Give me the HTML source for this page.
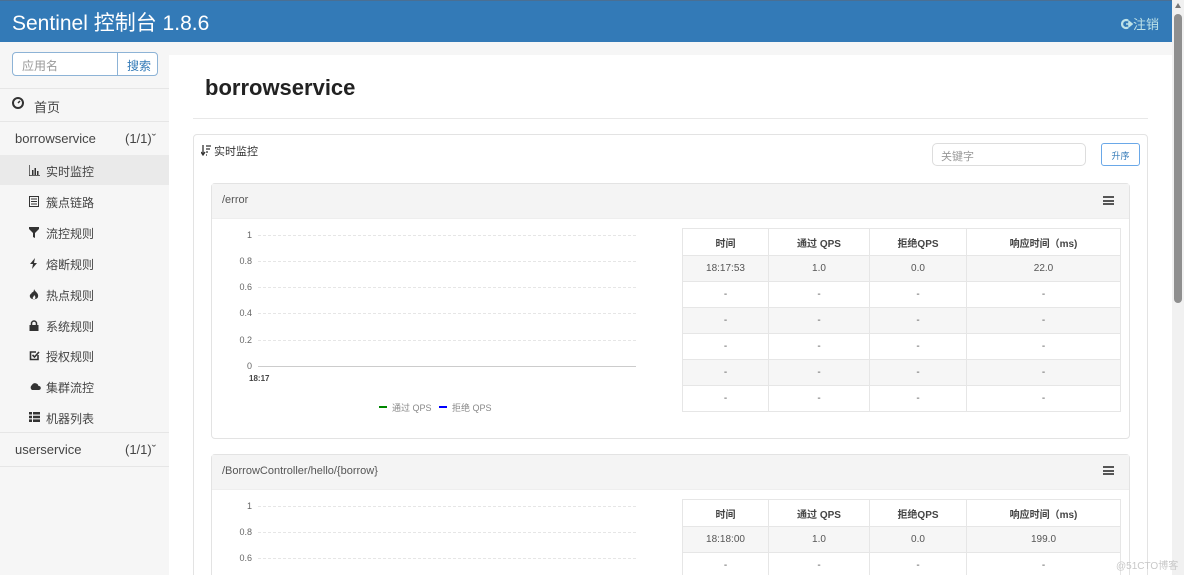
<!DOCTYPE html>
<html style="width:1184px;height:575px;overflow:hidden"><head><meta charset="utf-8"><style>
*{box-sizing:border-box;margin:0;padding:0}
body{width:1184px;height:575px;overflow:hidden;position:relative;background:#fff;font-family:"Liberation Sans","Noto Sans CJK SC",sans-serif;color:#333}
.a{position:absolute}
.hdr{left:0;top:0;width:1172px;height:42px;background:#337ab7;border-top:1px solid #4a6f93}
.side{left:0;top:42px;width:169px;height:533px;background:#f6f6f6}
.main{left:169px;top:42px;width:1003px;height:533px;background:#f6f6f6}
.white{left:169px;top:55px;width:1003px;height:520px;background:#fff}
.nav{position:absolute;left:0;width:169px;font-size:12px;color:#444;height:16px}
.nav span{position:absolute;left:46px;top:0}
.nav svg{position:absolute;left:29px;top:2px}
.sep{position:absolute;left:0;width:169px;height:1px;background:#e6e6e6}
.card{border:1px solid #e3e3e3;border-radius:4px;background:#fff}
.ch{background:#f4f4f4;height:35px;border-bottom:1px solid #eee;font-size:11px;color:#555;padding:10px 0 0 10px}
table{border-collapse:collapse;font-size:10px;color:#555}
td,th{border:1px solid #e6e6e6;text-align:center;height:26px}
th{font-weight:bold;color:#444;height:27px}
tr.g td{background:#f6f6f6}
.yl{position:absolute;font-size:9px;color:#666;text-align:right;width:30px}
.gl{position:absolute;height:0;border-top:1px dashed #e6e6e6}
.ham{position:absolute;width:11px;height:9px;border-top:2px solid #555;border-bottom:2px solid #555}
.ham:after{content:"";position:absolute;left:0;top:1.5px;width:11px;height:2px;background:#555}
</style></head><body>
<div class="a hdr"></div>
<div class="a" style="left:12px;top:7px;font-size:21px;color:#fff">Sentinel 控制台 1.8.6</div>
<div class="a" style="left:1121px;top:14px;font-size:13px;color:#bfe3e8">
<svg width="12" height="12" viewBox="0 0 12 12" style="vertical-align:-1px"><path d="M7 2.5A4 4 0 1 0 7 9.5" stroke="#bfe3e8" stroke-width="2.2" fill="none"/><path d="M5 6h4M8 3.5l3 2.5-3 2.5z" stroke="#bfe3e8" stroke-width="1.6" fill="#bfe3e8"/></svg>注销</div>
<div class="a" style="left:1172px;top:0;width:12px;height:575px;background:#f1f1f1"></div>
<div class="a" style="left:1174px;top:14px;width:8px;height:289px;background:#8f8f8f;border-radius:4px"></div>
<div class="a" style="left:1175px;top:3px;width:0;height:0;border:3px solid transparent;border-bottom:5px solid #777;border-top:0"></div>
<div class="a side"></div>
<div class="a main"></div>
<div class="a white"></div>

<div class="a" style="left:12px;top:52px;width:146px;height:24px;border:1px solid #8db3d6;border-radius:4px;background:#fff;font-size:12px">
<span class="a" style="left:9px;top:4px;color:#999">应用名</span>
<div class="a" style="left:104px;top:-1px;width:41px;height:24px;border-left:1px solid #8db3d6;color:#337ab7;padding:5px 0 0 9px">搜索</div></div>
<div class="sep" style="top:88px"></div>
<div class="nav" style="top:97px;font-size:13px"><svg style="left:12px;top:0" width="12" height="12" viewBox="0 0 12 12"><circle cx="6" cy="6" r="5" fill="none" stroke="#333" stroke-width="2"/><path d="M6 6L8 4" stroke="#333" stroke-width="1.5"/></svg><span style="left:34px">首页</span></div>
<div class="sep" style="top:121px"></div>
<div class="nav" style="top:131px;font-size:13px"><span style="left:15px">borrowservice</span><span style="left:125px">(1/1)ˇ</span></div>
<div class="a" style="left:0;top:155px;width:169px;height:30px;background:#eaeaea"></div>
<div class="nav" style="top:163px"><svg width="11" height="11" viewBox="0 0 11 11"><path d="M0 0v11h11" stroke="#333" fill="none" stroke-width="1.4"/><path d="M3 5h1.5v5H3zM5.5 3H7v7H5.5zM8 6h1.5v4H8z" fill="#333"/></svg><span>实时监控</span></div>
<div class="nav" style="top:194px"><svg width="10" height="11" viewBox="0 0 10 11"><rect x="0.5" y="0.5" width="9" height="10" fill="none" stroke="#333"/><path d="M2 3h6M2 5.5h6M2 8h6" stroke="#333"/></svg><span>簇点链路</span></div>
<div class="nav" style="top:225px"><svg width="10" height="11" viewBox="0 0 10 11"><path d="M0 0h10v2L6 6v5L4 10V6L0 2z" fill="#333"/></svg><span>流控规则</span></div>
<div class="nav" style="top:256px"><svg width="10" height="11" viewBox="0 0 10 11"><path d="M6 0L1 6h3l-1 5 5-6H5z" fill="#333"/></svg><span>熔断规则</span></div>
<div class="nav" style="top:287px"><svg width="10" height="11" viewBox="0 0 10 11"><path d="M5 0C6 3 10 4 9 8 8 11 2 11 1 8 0 5 3 5 3 3 4 4 5 2 5 0z" fill="#333"/><path d="M5 6c1 1 2 2 1 4H4C3 8 5 8 5 6z" fill="#f6f6f6"/></svg><span>热点规则</span></div>
<div class="nav" style="top:318px"><svg width="10" height="11" viewBox="0 0 10 11"><path d="M2.5 5V3.5a2.5 2.5 0 0 1 5 0V5" stroke="#333" stroke-width="1.5" fill="none"/><rect x="0.5" y="5" width="9" height="6" fill="#333"/></svg><span>系统规则</span></div>
<div class="nav" style="top:348px"><svg width="11" height="11" viewBox="0 0 11 11"><path d="M9 5v4.5H1.5V2H7" stroke="#333" stroke-width="1.6" fill="none"/><path d="M3.5 5l2 2L10 2" stroke="#333" stroke-width="1.6" fill="none"/></svg><span>授权规则</span></div>
<div class="nav" style="top:379px"><svg width="12" height="10" viewBox="0 0 12 10"><path d="M3 9a3 3 0 0 1 0-5 3.5 3.5 0 0 1 6.5 1A2 2 0 0 1 10 9z" fill="#333"/></svg><span>集群流控</span></div>
<div class="nav" style="top:410px"><svg width="11" height="10" viewBox="0 0 11 10"><path d="M0 0h3v2.5H0zM4 0h7v2.5H4zM0 3.7h3v2.5H0zM4 3.7h7v2.5H4zM0 7.4h3V10H0zM4 7.4h7V10H4z" fill="#333"/></svg><span>机器列表</span></div>
<div class="sep" style="top:432px"></div>
<div class="nav" style="top:442px;font-size:13px"><span style="left:15px">userservice</span><span style="left:125px">(1/1)ˇ</span></div>
<div class="sep" style="top:466px"></div>

<div class="a" style="left:205px;top:75px;font-size:22px;font-weight:bold;color:#222">borrowservice</div>
<div class="a" style="left:193px;top:118px;width:955px;height:1px;background:#e8e8e8"></div>
<div class="a card" style="left:193px;top:134px;width:955px;height:460px"></div>
<div class="a" style="left:201px;top:143px;font-size:11px;color:#333"><svg width="10" height="11" viewBox="0 0 10 11" style="vertical-align:-1px"><path d="M2 0v9M0 7l2 3 2-3" stroke="#333" stroke-width="1.3" fill="none"/><path d="M5 1h5M5 4h4M5 7h2M5 10h1" stroke="#333" stroke-width="1.3"/></svg> 实时监控</div>
<div class="a" style="left:932px;top:143px;width:154px;height:23px;border:1px solid #ddd;border-radius:5px;font-size:11px;color:#999;padding:4px 8px">关键字</div>
<div class="a" style="left:1101px;top:143px;width:39px;height:23px;border:1px solid #6aa8e8;border-radius:3px;font-size:9px;color:#337ab7;text-align:center;padding-top:5px">升序</div>

<div class="a card" style="left:211px;top:183px;width:919px;height:256px"><div class="ch">/error</div></div>
<div class="ham" style="left:1103px;top:196px"></div>
<div class="yl" style="left:222px;top:230px">1</div><div class="gl" style="left:258px;top:235px;width:378px"></div>
<div class="yl" style="left:222px;top:256px">0.8</div><div class="gl" style="left:258px;top:261px;width:378px"></div>
<div class="yl" style="left:222px;top:282px">0.6</div><div class="gl" style="left:258px;top:287px;width:378px"></div>
<div class="yl" style="left:222px;top:308px">0.4</div><div class="gl" style="left:258px;top:313px;width:378px"></div>
<div class="yl" style="left:222px;top:335px">0.2</div><div class="gl" style="left:258px;top:340px;width:378px"></div>
<div class="yl" style="left:222px;top:361px">0</div><div class="a" style="left:258px;top:366px;width:378px;height:1px;background:#ccc"></div>
<div class="a" style="left:249px;top:374px;font-size:8px;font-weight:bold;color:#444">18:17</div>
<div class="a" style="left:379px;top:401px;font-size:9px;color:#888"><b style="display:inline-block;width:8px;height:2px;background:#080;vertical-align:3px"></b>&nbsp; 通过 QPS &nbsp;&nbsp;<b style="display:inline-block;width:8px;height:2px;background:#00f;vertical-align:3px"></b>&nbsp; 拒绝 QPS</div>
<table class="a" style="left:682px;top:228px;width:439px">
<tr><th style="width:86px">时间</th><th style="width:101px">通过 QPS</th><th style="width:97px">拒绝QPS</th><th>响应时间（ms)</th></tr>
<tr class="g"><td>18:17:53</td><td>1.0</td><td>0.0</td><td>22.0</td></tr>
<tr><td>-</td><td>-</td><td>-</td><td>-</td></tr>
<tr class="g"><td>-</td><td>-</td><td>-</td><td>-</td></tr>
<tr><td>-</td><td>-</td><td>-</td><td>-</td></tr>
<tr class="g"><td>-</td><td>-</td><td>-</td><td>-</td></tr>
<tr><td>-</td><td>-</td><td>-</td><td>-</td></tr>
</table>

<div class="a card" style="left:211px;top:454px;width:919px;height:140px"><div class="ch">/BorrowController/hello/{borrow}</div></div>
<div class="ham" style="left:1103px;top:466px"></div>
<div class="yl" style="left:222px;top:501px">1</div><div class="gl" style="left:258px;top:506px;width:378px"></div>
<div class="yl" style="left:222px;top:527px">0.8</div><div class="gl" style="left:258px;top:532px;width:378px"></div>
<div class="yl" style="left:222px;top:553px">0.6</div><div class="gl" style="left:258px;top:558px;width:378px"></div>
<table class="a" style="left:682px;top:499px;width:439px">
<tr><th style="width:86px">时间</th><th style="width:101px">通过 QPS</th><th style="width:97px">拒绝QPS</th><th>响应时间（ms)</th></tr>
<tr class="g"><td>18:18:00</td><td>1.0</td><td>0.0</td><td>199.0</td></tr>
<tr><td>-</td><td>-</td><td>-</td><td>-</td></tr>
</table>
<div class="a" style="left:1116px;top:557px;font-size:10px;color:#c8c8c8">@51CTO博客</div>
</body></html>
